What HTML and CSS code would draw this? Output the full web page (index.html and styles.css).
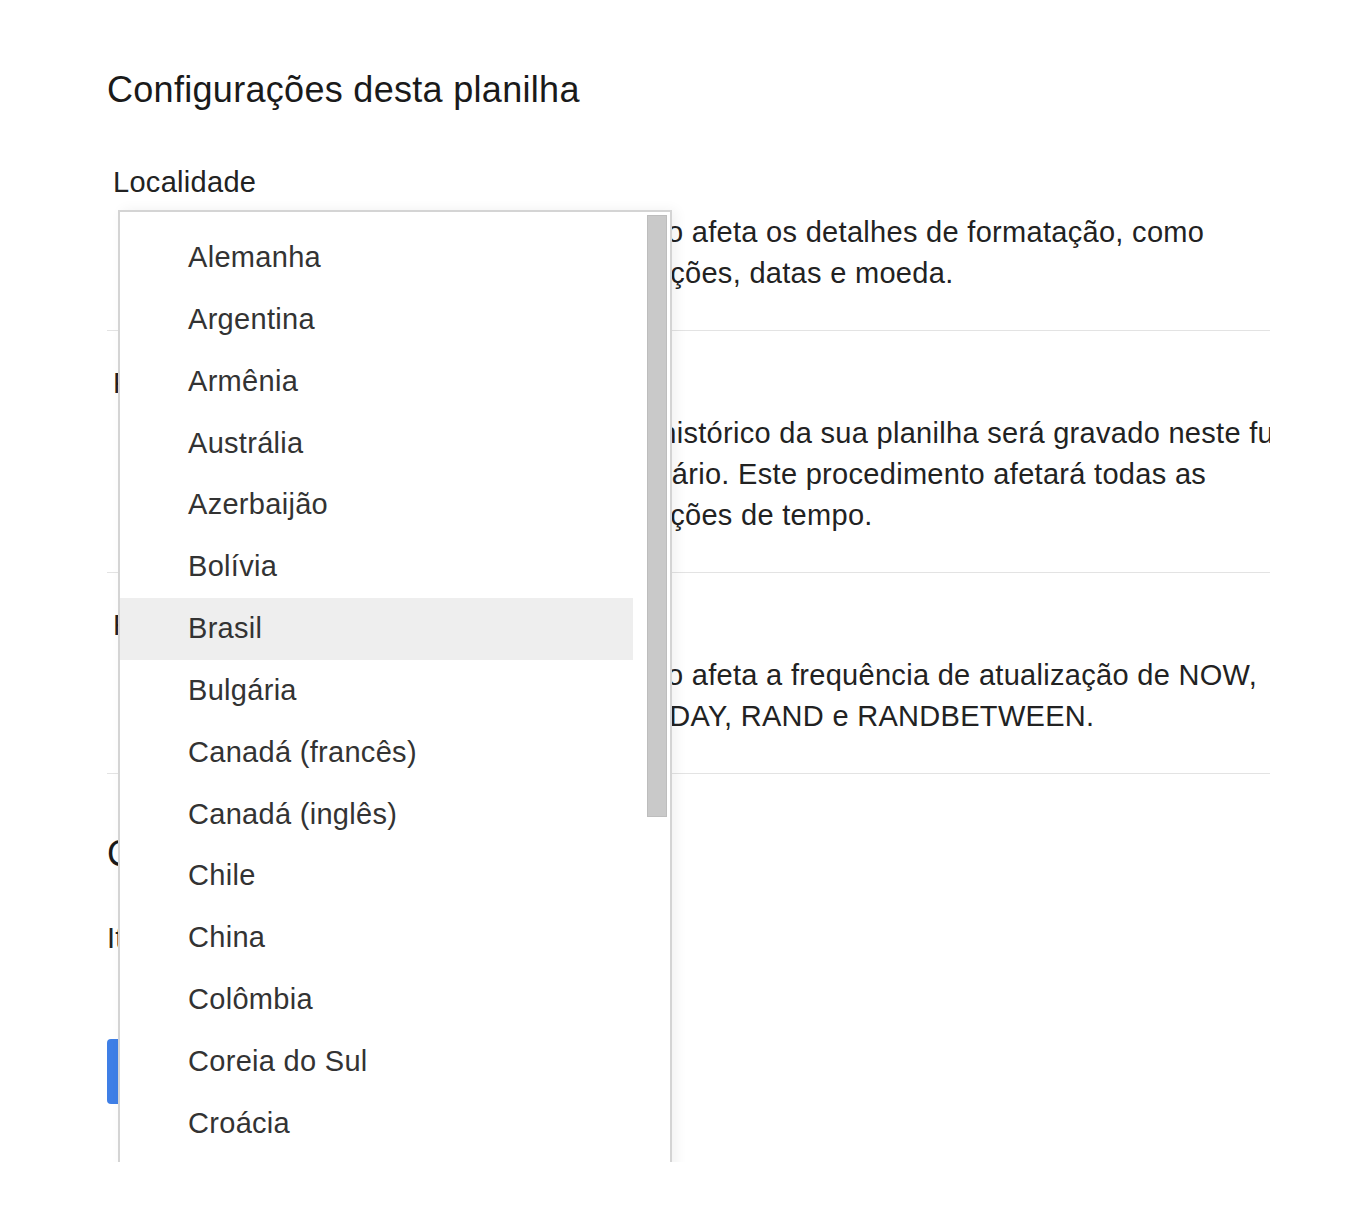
FILE: index.html
```html
<!DOCTYPE html>
<html lang="pt-BR">
<head>
  <meta charset="UTF-8">
  <meta name="viewport" content="width=device-width, initial-scale=1.0">
  <title>Configurações desta planilha</title>
  <link rel="stylesheet" href="styles.css">
</head>
<body>

  <div class="page">
    <div class="settings">
      <h1 class="title">Configurações desta planilha</h1>

      <!-- Localidade -->
      <div class="section first">
        <div class="label">Localidade</div>
        <div class="section-body">
          <div class="control">
            <div class="select-box">Brasil</div>
          </div>
          <div class="help">Isso afeta os detalhes de formatação, como funções, datas e moeda.</div>
        </div>
      </div>

      <!-- Fuso horário -->
      <div class="section">
        <div class="label">Fuso horário da planilha</div>
        <div class="section-body">
          <div class="control">
            <div class="select-box">(GMT-03:00) Horário de Brasília</div>
          </div>
          <div class="help">O histórico da sua planilha será gravado neste fuso horário. Este procedimento afetará todas as funções de tempo.</div>
        </div>
      </div>

      <!-- Recálculo -->
      <div class="section">
        <div class="label">Recálculo</div>
        <div class="section-body">
          <div class="control">
            <div class="select-box">Ao mudar</div>
          </div>
          <div class="help">Isso afeta a frequência de atualização de NOW, TODAY, RAND e RANDBETWEEN.</div>
        </div>
      </div>

      <h2 class="subtitle">Cálculo iterativo</h2>
      <div class="option">Iteração desativada</div>

      <button class="save-btn">Salvar configurações</button>
    </div>

    <!-- Dropdown aberto da localidade -->
    <div class="dropdown">
      <ul class="dropdown-list">
        <li>Alemanha</li>
        <li>Argentina</li>
        <li>Armênia</li>
        <li>Austrália</li>
        <li>Azerbaijão</li>
        <li>Bolívia</li>
        <li class="selected">Brasil</li>
        <li>Bulgária</li>
        <li>Canadá (francês)</li>
        <li>Canadá (inglês)</li>
        <li>Chile</li>
        <li>China</li>
        <li>Colômbia</li>
        <li>Coreia do Sul</li>
        <li>Croácia</li>
        <li>Dinamarca</li>
        <li>Egito</li>
      </ul>
      <div class="scrollbar">
        <div class="thumb"></div>
      </div>
    </div>
  </div>

</body>
</html>
```

FILE: styles.css
```css
body {
  margin: 0;
  padding: 0;
  background: #ffffff;
  font-family: "Liberation Sans", Arial, sans-serif;
  letter-spacing: 0.3px;
  color: #222222;
}

.page {
  position: relative;
  height: 1162px;
  overflow: hidden;
}

.settings {
  margin-left: 107px;
  width: 1163px;
  overflow: hidden;
}

.title {
  margin: 68px 0 0 0;
  font-size: 36px;
  line-height: 44px;
  font-weight: normal;
  color: #1a1a1a;
  white-space: nowrap;
}

/* Sections */
.section {
  padding: 32px 0 36px 0;
  border-bottom: 1px solid #e3e3e3;
}

.section.first {
  padding-top: 50px;
}

.label {
  margin-left: 6px;
  font-size: 29px;
  line-height: 41px;
  color: #222222;
}

.section-body {
  display: flex;
  margin-top: 9px;
}

.control {
  flex: 0 0 522px;
}

.select-box {
  width: 460px;
  height: 56px;
  margin-left: 20px;
  border: 1px solid #cccccc;
  border-radius: 3px;
  font-size: 27px;
  line-height: 56px;
  padding-left: 14px;
}

.help {
  flex: 0 0 684px;
  font-size: 29px;
  line-height: 41px;
  color: #222222;
}

.subtitle {
  margin: 58px 0 0 0;
  font-size: 36px;
  line-height: 44px;
  font-weight: normal;
  color: #1a1a1a;
}

.option {
  margin-top: 42px;
  font-size: 29px;
  line-height: 41px;
}

.save-btn {
  margin-top: 80px;
  height: 65px;
  padding: 0 30px;
  border: none;
  border-radius: 4px;
  background-color: #3f7fe6;
  color: white;
  font-family: inherit;
  font-size: 26px;
}

/* Dropdown */
.dropdown {
  position: absolute;
  top: 210px;
  left: 118px;
  width: 550px;
  height: 1100px;
  display: flex;
  background: #ffffff;
  border: 2px solid #d4d4d4;
  box-shadow: 4px 0 12px rgba(0, 0, 0, 0.06);
}

.dropdown-list {
  list-style: none;
  margin: 0;
  padding: 15px 0 0 0;
  width: 513px;
}

.dropdown-list li {
  height: 61.85px;
  line-height: 61.85px;
  padding-left: 68px;
  font-size: 29px;
  color: #333333;
  white-space: nowrap;
}

.dropdown-list li.selected {
  background: #eeeeee;
}

.scrollbar {
  margin-left: 14px;
  padding-top: 3px;
}

.thumb {
  width: 20px;
  height: 602px;
  background: #c9c9c9;
  border: 1px solid #bdbdbd;
  box-sizing: border-box;
}
```
